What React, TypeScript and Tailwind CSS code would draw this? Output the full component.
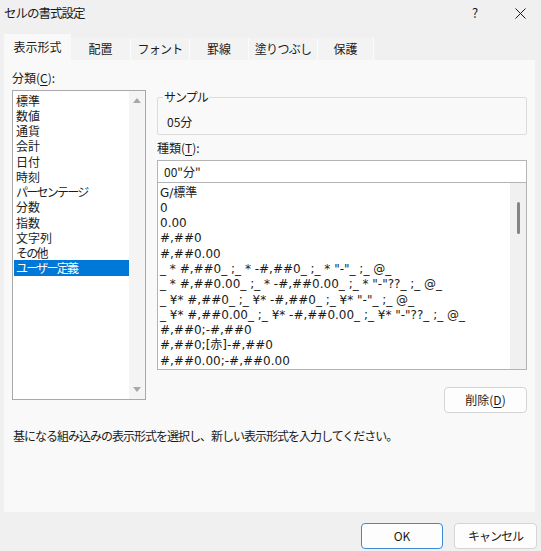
const categories = [
  { label: "標準", kana: false },
  { label: "数値", kana: false },
  { label: "通貨", kana: false },
  { label: "会計", kana: false },
  { label: "日付", kana: false },
  { label: "時刻", kana: false },
  { label: "パーセンテージ", kana: true },
  { label: "分数", kana: false },
  { label: "指数", kana: false },
  { label: "文字列", kana: false },
  { label: "その他", kana: true },
  { label: "ユーザー定義", kana: true },
];

const formats = [
  "G/標準",
  "0",
  "0.00",
  "#,##0",
  "#,##0.00",
  '_ * #,##0_ ;_ * -#,##0_ ;_ * "-"_ ;_ @_',
  '_ * #,##0.00_ ;_ * -#,##0.00_ ;_ * "-"??_ ;_ @_',
  '_ ¥* #,##0_ ;_ ¥* -#,##0_ ;_ ¥* "-"_ ;_ @_',
  '_ ¥* #,##0.00_ ;_ ¥* -#,##0.00_ ;_ ¥* "-"??_ ;_ @_',
  "#,##0;-#,##0",
  "#,##0;[赤]-#,##0",
  "#,##0.00;-#,##0.00",
];

const tabs = [
  { label: "配置", width: "w-[60px]", kana: false },
  { label: "フォント", width: "w-[59px]", kana: true },
  { label: "罫線", width: "w-[59px]", kana: false },
  { label: "塗りつぶし", width: "w-[69px]", kana: true },
  { label: "保護", width: "w-[56px]", kana: false },
];

interface ButtonProps {
  children: React.ReactNode;
  primary?: boolean;
  className?: string;
}

function DialogButton({ children, primary, className = "" }: ButtonProps) {
  return (
    <button
      className={`h-[26px] rounded-[4px] bg-[#fdfdfd] text-[12px] text-[#1b1b1b] ${
        primary ? "border border-[#3b8ad6]" : "border border-[#d5d5d5]"
      } ${className}`}
    >
      {children}
    </button>
  );
}

function Triangle({ up }: { up?: boolean }) {
  return (
    <svg width="8" height="5" viewBox="0 0 8 5">
      <path d={up ? "M0 5 L4 0 L8 5 Z" : "M0 0 L4 5 L8 0 Z"} fill="#a8a8a8" />
    </svg>
  );
}

export default function App() {
  return (
    <div
      className="w-[541px] h-[551px] bg-[#f0f0f0] text-[#1b1b1b] text-[12px] overflow-hidden"
      style={{ fontFamily: '"Noto Sans CJK JP", "Noto Sans", sans-serif' }}
    >
      {/* title bar */}
      <div className="h-[34px] flex items-start pt-[5px] pl-[4px]">
        <span className="text-[12.5px] leading-[16px] tracking-[-1px]">セルの書式設定</span>
        <span className="ml-auto w-[12px] text-center text-[13px] leading-[16px] mr-[34px]">?</span>
        <svg width="11" height="11" viewBox="0 0 11 11" className="mt-[3px] mr-[15px]">
          <path d="M0.5 0.5 L10.5 10.5 M10.5 0.5 L0.5 10.5" stroke="#1b1b1b" strokeWidth="1" />
        </svg>
      </div>

      {/* tabs */}
      <div className="h-[26px] flex items-end pl-[4px]">
        <div className="w-[67px] h-[26px] bg-[#f9f9f9] flex items-center justify-center">
          表示形式
        </div>
        {tabs.map((t) => (
          <div
            key={t.label}
            className={`${t.width} h-[22px] bg-[#f3f3f3] border-r border-[#fbfbfb] flex items-center justify-center ${
              t.kana ? "tracking-[-0.75px]" : ""
            }`}
          >
            {t.label}
          </div>
        ))}
      </div>

      {/* panel */}
      <div className="mx-[4px] w-[531px] h-[452px] bg-[#f9f9f9] pt-[10px] px-[8px] flex flex-col">
        <div className="h-[16px] leading-[16px]">
          分類(<span className="underline underline-offset-2">C</span>):
        </div>

        <div className="mt-[3px] flex items-start">
          {/* category list */}
          <div className="mt-[1px] w-[134px] h-[310px] border border-[#a9a9a9] bg-white flex">
            <div className="flex-1 pt-[1.5px] pl-[1px]">
              {categories.map((c, i) => (
                <div
                  key={c.label}
                  className={`h-[15.25px] leading-[15.25px] pl-[2px] ${
                    c.kana ? "tracking-[-1.75px]" : ""
                  } ${i === categories.length - 1 ? "bg-[#0078d7] text-white" : ""}`}
                >
                  {c.label}
                </div>
              ))}
            </div>
            <div className="w-[16px] bg-[#f4f4f4] flex flex-col items-center justify-between pt-[7px] pb-[7px]">
              <Triangle up />
              <Triangle />
            </div>
          </div>

          {/* right column */}
          <div className="ml-[11px] w-[370px] flex flex-col">
            <fieldset className="h-[46px] border border-[#dcdcdc] rounded-[2px] px-[9px]">
              <legend className="ml-[-4px] px-[1px] leading-[16px] tracking-[-1px]">サンプル</legend>
              <div className="mt-[9px] leading-[16px]">05分</div>
            </fieldset>

            <div className="mt-[5px] h-[16px] leading-[16px]">
              種類(<span className="underline underline-offset-2">T</span>):
            </div>

            <div className="mt-[4px] h-[23px] border border-[#b4b4b4] bg-white px-[6px] leading-[21px]">
              00"分"
            </div>

            <div className="mt-[-1px] h-[188px] border border-[#b4b4b4] bg-white flex overflow-hidden">
              <div
                className="flex-1 pt-[2.5px] pl-[2px] overflow-hidden whitespace-pre text-[12px]"
                style={{ fontFamily: '"DejaVu Sans", "Noto Sans CJK JP", sans-serif' }}
              >
                {formats.map((f) => (
                  <div key={f} className="h-[15.3px] leading-[15.3px]">
                    {f}
                  </div>
                ))}
              </div>
              <div className="w-[16px] bg-[#f0f0f0] pt-[19px] flex justify-center">
                <div className="w-[3px] h-[32px] rounded-full bg-[#858585]" />
              </div>
            </div>

            <DialogButton className="mt-[17px] self-end w-[83px]">
              削除(<span className="underline underline-offset-2">D</span>)
            </DialogButton>
          </div>
        </div>

        <div className="mt-[15px] leading-[16px] pl-[1px] tracking-[-1px]">
          基になる組み込みの表示形式を選択し、新しい表示形式を入力してください。
        </div>
      </div>

      {/* footer buttons */}
      <div className="mt-[11px] flex justify-end gap-[11px] pr-[4px]">
        <DialogButton primary className="w-[82px]">
          OK
        </DialogButton>
        <DialogButton className="w-[83px] tracking-[-1px]">キャンセル</DialogButton>
      </div>
    </div>
  );
}
